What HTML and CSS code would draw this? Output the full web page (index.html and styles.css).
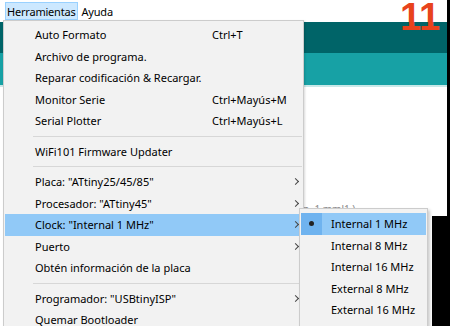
FILE: index.html
```html
<!DOCTYPE html>
<html>
<head>
    <title>Herramientas</title>
    <meta name="viewport" content="width=device-width, initial-scale=1.0">
    <link rel="stylesheet" href="styles.css">
</head>
<body>
    <div class="screen">
        <!-- barra de menús -->
        <div class="menubar">
            <span class="menu-title active">Herramientas</span>
            <span class="menu-title">Ayuda</span>
        </div>

        <!-- fondo del IDE -->
        <div class="toolbar"></div>
        <div class="tabs"></div>
        <div class="editor upper">
            <p class="code-hint">(n &nbsp;1 mml1 )</p>
        </div>
        <div class="editor lower"></div>

        <div class="step-number">11</div>

        <!-- menú Herramientas -->
        <div class="dropdown">
            <div class="menu-item"><span class="label">Auto Formato</span><span class="shortcut">Ctrl+T</span></div>
            <div class="menu-item"><span class="label">Archivo de programa.</span></div>
            <div class="menu-item"><span class="label">Reparar codificación &amp; Recargar.</span></div>
            <div class="menu-item"><span class="label">Monitor Serie</span><span class="shortcut">Ctrl+Mayús+M</span></div>
            <div class="menu-item"><span class="label">Serial Plotter</span><span class="shortcut">Ctrl+Mayús+L</span></div>
            <div class="separator"></div>
            <div class="menu-item"><span class="label">WiFi101 Firmware Updater</span></div>
            <div class="separator"></div>
            <div class="menu-item"><span class="label">Placa: "ATtiny25/45/85"</span><span class="arrow"></span></div>
            <div class="menu-item"><span class="label">Procesador: "ATtiny45"</span><span class="arrow"></span></div>
            <div class="menu-item hover"><span class="label">Clock: "Internal 1 MHz"</span><span class="arrow"></span></div>
            <div class="menu-item"><span class="label">Puerto</span><span class="arrow"></span></div>
            <div class="menu-item"><span class="label">Obtén información de la placa</span></div>
            <div class="separator"></div>
            <div class="menu-item"><span class="label">Programador: "USBtinyISP"</span><span class="arrow"></span></div>
            <div class="menu-item"><span class="label">Quemar Bootloader</span></div>
        </div>

        <!-- submenú Clock -->
        <div class="submenu">
            <div class="sub-item hover"><span class="check"><span class="dot"></span></span><span>Internal 1 MHz</span></div>
            <div class="sub-item"><span class="check"></span><span>Internal 8 MHz</span></div>
            <div class="sub-item"><span class="check"></span><span>Internal 16 MHz</span></div>
            <div class="sub-item"><span class="check"></span><span>External 8 MHz</span></div>
            <div class="sub-item"><span class="check"></span><span>External 16 MHz</span></div>
        </div>
    </div>
</body>
</html>
```

FILE: styles.css
```css
/* base */
body {
    margin: 0;
    background: #000;
    font-family: "Noto Sans", "Open Sans", sans-serif;
    font-size: 11px;
    color: #000;
    overflow: hidden;
}

.screen {
    position: relative;
    width: 447px;
    height: 326px;
    overflow: hidden;
}

/* barra de menús */
.menubar {
    height: 22px;
    background: #fff;
    padding-left: 5px;
    display: flex;
    align-items: flex-start;
    gap: 2px;
    box-sizing: border-box;
}

.menu-title {
    margin-top: 2px;
    height: 18px;
    line-height: 17px;
    padding: 0 1px;
    border: 1px solid transparent;
    box-sizing: border-box;
    letter-spacing: -0.2px;
}

.menu-title.active {
    background: #cce8ff;
    border-color: #99d1ff;
}

/* fondo del IDE */
.toolbar {
    height: 31px;
    background: #006468;
}

.tabs {
    height: 32px;
    background: #17a1a5;
    border-bottom: 2px solid #c9e8e8;
}

.editor {
    background: #fff;
}

.editor.upper {
    height: 129px;
    overflow: hidden;
}

.editor.lower {
    height: 110px;
    width: 432px;
}

.code-hint {
    margin: 115px 0 0 300px;
    color: #8a8a8a;
    font-size: 10px;
}

.step-number {
    position: absolute;
    top: 0;
    left: 400px;
    line-height: 34px;
    font-family: "Liberation Sans", Arial, sans-serif;
    font-weight: bold;
    font-size: 38px;
    color: #e8431c;
}

/* menú desplegable */
.dropdown {
    position: absolute;
    left: 3px;
    top: 20px;
    width: 301px;
    box-sizing: border-box;
    background: #f2f2f2;
    border: 1px solid #cccccc;
    padding: 3px 1px;
    box-shadow: 1px 1px 2px rgba(0,0,0,0.15);
}

.menu-item {
    display: grid;
    grid-template-columns: 30px 177px 1fr 12px;
    height: 21.5px;
    line-height: 21px;
    white-space: nowrap;
}

.menu-item .label {
    grid-column: 2;
}

.menu-item .shortcut {
    grid-column: 3;
}

.menu-item .arrow {
    grid-column: 4;
    position: relative;
}

.menu-item .arrow::after {
    content: "";
    position: absolute;
    left: 3px;
    top: 8px;
    width: 4px;
    height: 4px;
    border-right: 1px solid #444;
    border-top: 1px solid #444;
    transform: rotate(45deg);
}

.menu-item.hover {
    background: #91c9f7;
}

.separator {
    height: 9px;
    margin-left: 28px;
    background: linear-gradient(#d7d7d7, #d7d7d7) no-repeat 0 4px / 100% 1px;
}

/* submenú */
.submenu {
    position: absolute;
    left: 299px;
    top: 208px;
    width: 129px;
    box-sizing: border-box;
    background: #f2f2f2;
    border: 1px solid #cccccc;
    padding: 4px 1px 20px;
    box-shadow: 2px 2px 3px rgba(0,0,0,0.2);
}

.sub-item {
    display: flex;
    height: 21.5px;
    line-height: 21px;
    white-space: nowrap;
}

.sub-item .check {
    width: 21px;
    margin-right: 9px;
    display: flex;
    align-items: center;
    justify-content: center;
}

.sub-item.hover {
    background: #91c9f7;
}

.sub-item.hover .check {
    background: #6fb3ef;
}

.dot {
    width: 5px;
    height: 5px;
    border-radius: 50%;
    background: #222;
}
```
